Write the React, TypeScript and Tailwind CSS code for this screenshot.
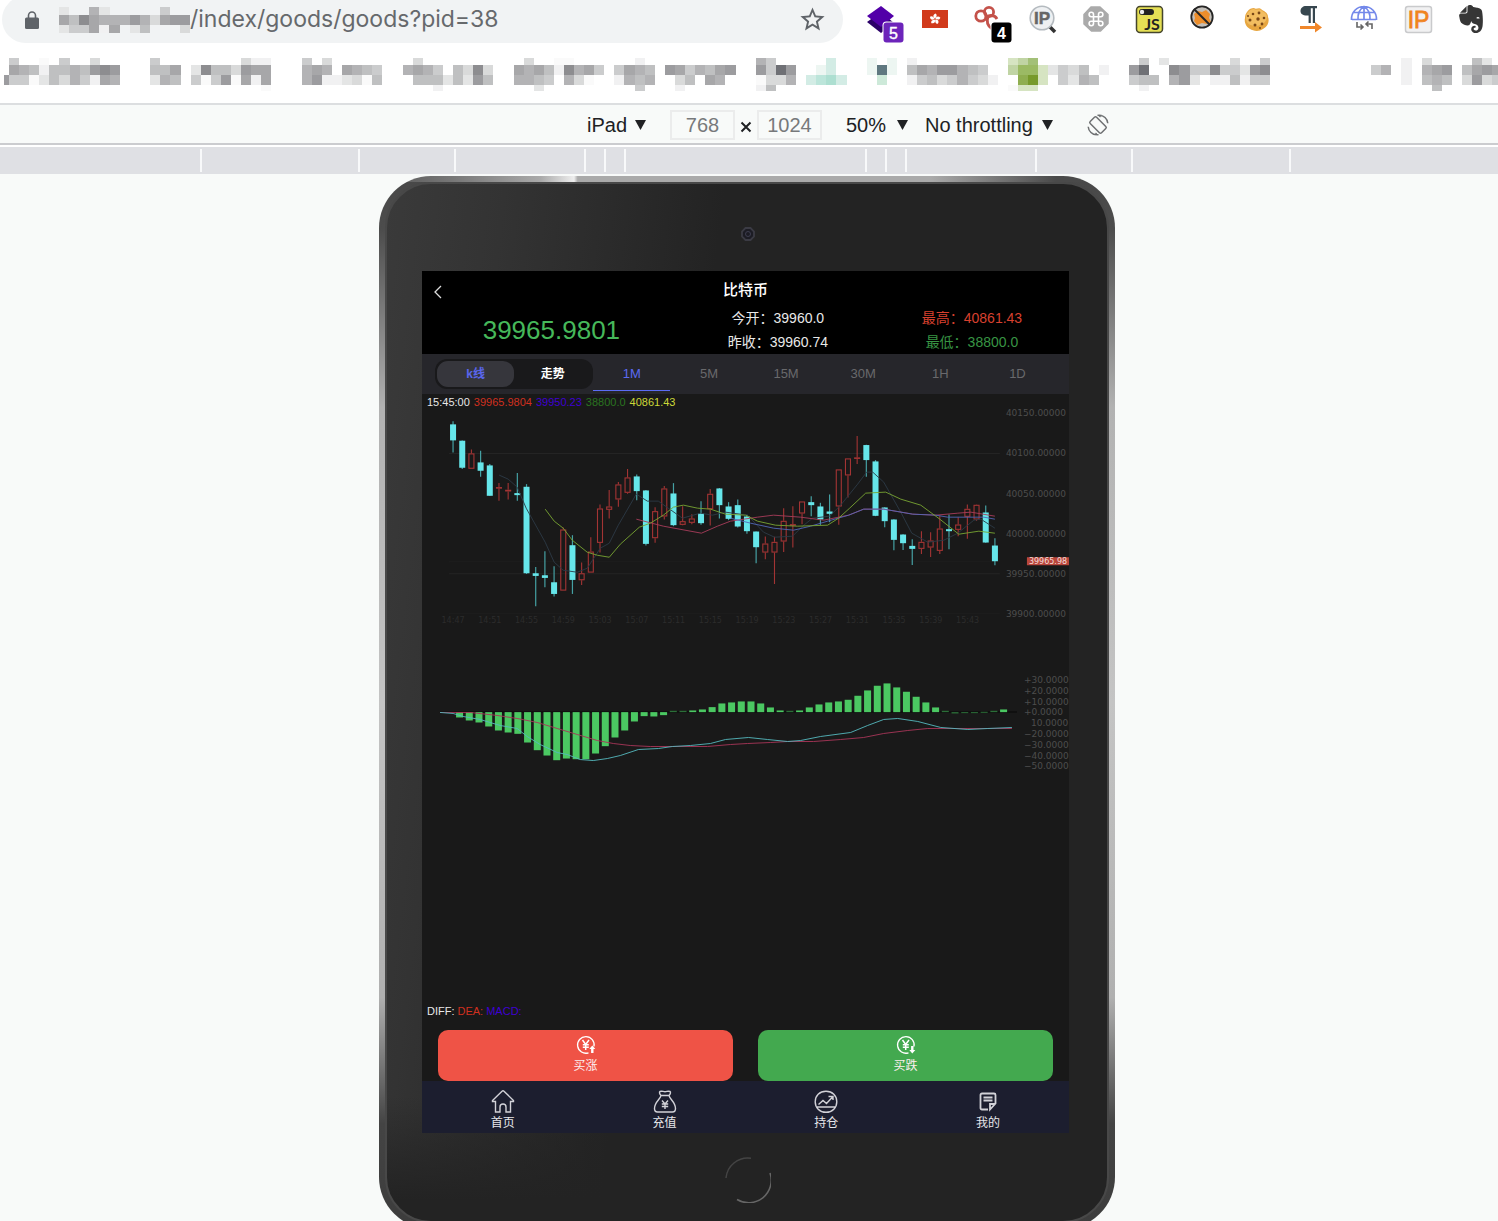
import type { ReactNode } from "react";
import { MdStarBorder } from "react-icons/md";
import { SiEvernote } from "react-icons/si";

/* ---------- pixelated (redacted) text ---------- */

type Strip = { row: number; col: number; levels: string };

const SHADES: Record<string, string> = {
  "0": "#fafafa", "1": "#f1f1f2", "2": "#e4e5e5", "3": "#d9dada", "4": "#cbcccd", "5": "#bfc0c1",
  "6": "#b3b3b5", "7": "#a7a7a9", "8": "#9c9c9f", "9": "#8d8d90", b: "#6f7075",
  p: "#edf6f2", q: "#d3ece5", r: "#bce5da", s: "#addfd1", t: "#5f7880", u: "#cde9d9",
  F: "#d6e4c2", G: "#c0d4a4", H: "#a3c078", I: "#9bba64", J: "#8fae50", K: "#779a2b",
};

const URL_STRIPS: Strip[] = [
  { row: 0, col: 0, levels: "2  62     4" },
  { row: 1, col: 0, levels: "7597666863788" },
  { row: 2, col: 0, levels: "244717 25   3" },
];

const BOOKMARK_STRIPS: Strip[] = [
  { row: 0, col: 0, levels: "4  0 4  3     4        311   4 3        3" },
  { row: 0, col: 51, levels: "3  00      1           64     q   p p 1" },
  { row: 0, col: 99, levels: "FGH" },
  { row: 0, col: 112, levels: "4 2      3  4" },
  { row: 0, col: 138, levels: "1 3    52" },
  { row: 1, col: 0, levels: "76515565898   557 29553877   676 7654  6764 5393" },
  { row: 1, col: 50, levels: "767519674 4765 8746578  84b8  pq   ptp 57688654" },
  { row: 1, col: 99, levels: "GIIF2435 1  8b  9844944289" },
  { row: 1, col: 135, levels: "46 1 678 5787" },
  { row: 2, col: -1, levels: "844025364176   265 40480717   68112305   55525285" },
  { row: 2, col: 50, levels: "6654 630  1656  35 76   0336 qrsq   u  145346431" },
  { row: 2, col: 100, levels: "JKF 4265   455 682 115144" },
  { row: 2, col: 138, levels: "1 565 3834" },
  { row: 3, col: 25, levels: "0" },
  { row: 3, col: 42, levels: "1" },
  { row: 3, col: 52, levels: "2" },
  { row: 3, col: 62, levels: "4   1" },
  { row: 3, col: 74, levels: "15" },
  { row: 3, col: 99, levels: "0FF" },
  { row: 3, col: 112, levels: "1" },
  { row: 3, col: 141, levels: "5" },
];

function Mosaic({ strips, rows, left, width, cell, label }: { strips: Strip[]; rows: number[]; left: number; width: number; cell: number; label: string }) {
  const height = rows[rows.length - 1];
  return (
    <svg width={width} height={height} viewBox={`0 0 ${width} ${height}`} role="img" aria-label={label} className="block shrink-0" shapeRendering="crispEdges">
      {strips.flatMap((s) =>
        s.levels.split("").map((c, i) => {
          const x = Math.max(s.col < 0 ? 4 : 0, left + (s.col + i) * cell);
          return c === " " ? null : (
            <rect key={`${s.row}-${s.col}-${i}`} x={x} y={rows[s.row]} width={left + (s.col + i + 1) * cell - x + 0.1} height={rows[s.row + 1] - rows[s.row]} fill={SHADES[c]} />
          );
        }),
      )}
    </svg>
  );
}

/* ---------- extension icons ---------- */

function Ext({ label, children }: { label: string; children: ReactNode }) {
  return (
    <button type="button" aria-label={label} className="flex flex-1 justify-center">
      <svg viewBox="0 0 48 46" className="h-[46px] w-12" fill="none">
        {children}
      </svg>
    </button>
  );
}

const PETALS = [0, 72, 144, 216, 288];

function Extensions() {
  return (
    <div className="flex w-[644px] shrink-0">
      <Ext label="Layers">
        <path d="M24 12 37 23 24 33 10 22z" fill="#2b0068" />
        <path d="M24 6 37 16 24 27 10 16z" fill="#5200a8" />
        <rect x="25.500" y="21.500" width="22" height="22" rx="4" fill="#fff" />
        <rect x="26.500" y="22.500" width="20" height="20" rx="3" fill="#6c24ba" />
        <text x="36.500" y="39" fontSize="16" textAnchor="middle" fill="#fff" stroke="#fff" strokeWidth=".4">5</text>
      </Ext>
      <Ext label="Hong Kong">
        <rect x="11" y="10" width="26" height="18" fill="#d13a1b" />
        <g fill="#fff" transform="translate(24 19)">
          {PETALS.map((a) => (
            <path key={a} d="M0-.5C-2.500-2-2-4.500.5-5.500 2.500-4 1.500-2 0-.5z" transform={`rotate(${a})`} />
          ))}
        </g>
      </Ext>
      <Ext label="Clover">
        <g stroke="#c4524a" strokeWidth="2.800">
          <circle cx="17" cy="16" r="5.200" />
          <circle cx="25" cy="12" r="4.600" />
          <path d="M21 18c4-4 10-3 12 1M24 17c-2 5 0 9 4 12" />
        </g>
        <rect x="26.500" y="21.500" width="22" height="22" rx="4" fill="#fff" />
        <rect x="27.500" y="22.500" width="20" height="20" rx="3" fill="#000" />
        <text x="37.500" y="39" fontSize="16" fontWeight="700" textAnchor="middle" fill="#fff">4</text>
      </Ext>
      <Ext label="IP lookup">
        <path d="m31 26 6 6" stroke="#333" strokeWidth="3.500" />
        <circle cx="24" cy="18" r="11.800" fill="#eef0f2" stroke="#b4babf" strokeWidth="1.600" />
        <text x="24" y="24" fontSize="17" fontWeight="700" textAnchor="middle" fill="#666" stroke="#666" strokeWidth=".5">IP</text>
      </Ext>
      <Ext label="Shortcuts">
        <path d="M19 7h9l8 7.500v9L28.500 31h-9L12 24v-9.500z" fill="#aaa" stroke="#aaa" strokeWidth="1.500" strokeLinejoin="round" />
        <path d="M21.500 14.500v9a2.200 2.200 0 1 1-2.200-2.200h9.400a2.200 2.200 0 1 1-2.200 2.200v-9a2.200 2.200 0 1 1 2.200 2.200h-9.400a2.200 2.200 0 1 1 2.200-2.200z" stroke="#fff" strokeWidth="1.600" />
      </Ext>
      <Ext label="JavaScript switch">
        <rect x="11.500" y="6.500" width="26" height="26" rx="3.500" fill="#e5df55" stroke="#45452c" strokeWidth="1.500" />
        <rect x="14" y="9" width="15" height="6" rx="3" fill="#222" />
        <circle cx="17" cy="12" r="2.200" fill="#eee" />
        <text x="27" y="29.500" fontSize="16" fontWeight="700" textAnchor="middle" fill="#222" fontFamily="Lato">JS</text>
      </Ext>
      <Ext label="Block cookies">
        <circle cx="23" cy="17" r="10.500" fill="#c3bfb9" />
        <path d="m15 14 4-3 4 1 4-2 4 4-1 4 2 4-4 2-5-1-5 2-3-4 1-3z" fill="#ec8e2c" />
        <circle cx="23" cy="17" r="10.700" stroke="#252525" strokeWidth="1.800" />
        <path d="m15 9 16 16" stroke="#252525" strokeWidth="2" />
      </Ext>
      <Ext label="Cookies">
        <path d="M21 8c2 2 5-1 7 1s7 3 7 8c2 5-1 10-5 12-4 3-10 2-13 0-4-2-6-7-5-11 0-5 4-10 9-10z" fill="#e7a640" />
        <path d="M21 9c2 2 5-1 7 1s6 3 6 7c0 5-6 9-11 9s-10-2-10-8c0-5 4-9 8-9z" fill="#f2bd60" />
        <g fill="#7a4818">
          <circle cx="20" cy="14" r="1.300" /><circle cx="26" cy="13" r="1.400" /><circle cx="31" cy="18" r="1.300" />
          <circle cx="25" cy="19" r="1.700" /><circle cx="17" cy="20" r="1.500" /><circle cx="22" cy="25" r="1.500" />
          <circle cx="29" cy="24" r="1.400" /><circle cx="15" cy="16" r="1" /><circle cx="27" cy="28" r="1" />
        </g>
      </Ext>
      <Ext label="Paragraph">
        <path d="M20 6h11v2.200h-2V23h-2.200V8.200h-2V23h-2.200v-7.500C17 16 14.500 14 14.500 11S17 6 20 6z" fill="#37474f" />
        <path d="M14 26h15v-4l7 5.500-7 5V29H14z" fill="#f0872a" />
      </Ext>
      <Ext label="Translate web">
        <g stroke="#7489ea" strokeWidth="1.700">
          <path d="M11.500 20C11 12 17 6.500 24 6.500S37 12 36.500 20M12 19.500h24M14 12.500h20M24 6.500v13M18 20c-.5-6 2-11 6-13.500 4 2.500 6.500 7.500 6 13.500" />
        </g>
        <path d="M17 22v5h6m-2.500-2.500L23 27l-2.500 2.500M32 29v-5h-6m2.500-2.500L26 24l2.500 2.500" stroke="#666" strokeWidth="1.600" />
      </Ext>
      <Ext label="IP address">
        <rect x="11.500" y="6.500" width="26" height="26" rx="2.500" fill="#f1f1f2" stroke="#c9cacc" strokeWidth="1.500" />
        <text x="24.500" y="27.500" fontSize="23" textAnchor="middle" fill="#f0841e" stroke="#f0841e" strokeWidth=".8">IP</text>
      </Ext>
      <Ext label="Evernote">
        <SiEvernote x="10" y="5" size={28} color="#363636" />
      </Ext>
    </div>
  );
}

/* ---------- browser chrome ---------- */

function Arrow() {
  return (
    <svg viewBox="0 0 11 10" className="pointer-events-none h-[10px] w-[11px]" aria-hidden="true">
      <path d="M0 0h11L5.500 10z" fill="#202124" />
    </svg>
  );
}

function Picker({ label, value, className }: { label: string; value: string; className: string }) {
  return (
    <span className="flex items-center">
      <select aria-label={label} defaultValue={value} className={`appearance-none bg-transparent text-xl leading-6 text-[#202124] ${className}`}>
        <option>{value}</option>
      </select>
      <Arrow />
    </span>
  );
}

const SEGMENTS = ["w-[158px]", "w-24", "w-[130px]", "w-5", "w-5", "w-[241px]", "w-5", "w-5", "w-[130px]", "w-24", "w-[158px]"];

function Chrome() {
  return (
    <header className="shrink-0 bg-white">
      <div className="flex h-[50px] items-start overflow-hidden pl-0.5">
        <div className="-mt-1 flex h-[47px] flex-1 items-center rounded-full bg-[#f1f3f4] pl-[23px] pr-4">
          <svg viewBox="0 0 14 18" className="h-[18px] w-3.5 shrink-0" aria-hidden="true">
            <path d="M3.500 7V4.500a3.500 3.500 0 0 1 7 0V7" fill="none" stroke="#5f6368" strokeWidth="1.600" />
            <rect y="6.500" width="14" height="11.500" rx="1.500" fill="#5f6368" />
          </svg>
          <label htmlFor="address" className="ml-5 shrink-0">
            <Mosaic label="Hidden host" strips={URL_STRIPS} rows={[0, 8, 18, 26]} left={0} width={131} cell={10.09} />
          </label>
          <input id="address" defaultValue="/index/goods/goods?pid=38" className="min-w-0 flex-1 bg-transparent font-['Inter',sans-serif] text-[23px] text-[#66696c] outline-none" />
          <button type="button" aria-label="Bookmark this page">
            <MdStarBorder className="size-[29px] text-[#5f6368]" />
          </button>
        </div>
        <div className="w-[11px] shrink-0" />
        <Extensions />
      </div>
      <div className="overflow-hidden pb-3 pt-2">
        <Mosaic label="Hidden bookmarks" strips={BOOKMARK_STRIPS} rows={[0, 7, 17, 27, 33]} left={9} width={1498} cell={10.09} />
      </div>
      <div className="flex h-[42px] items-center justify-center border-y-2 border-t-[#dcdee0] border-b-[#cbcccf] bg-[#f8faf9] pl-[198px] pt-0.5">
        <Picker label="Device" value="iPad" className="w-[48px]" />
        <input aria-label="Width" defaultValue="768" className="ml-6 h-[30px] w-[65px] border-2 border-[#ebecec] bg-transparent text-center text-xl text-[#77797b]" />
        <svg viewBox="0 0 12 12" className="mx-[5px] mt-1 size-3" aria-hidden="true">
          <path d="m1.500 1.500 9 9m0-9-9 9" stroke="#202124" strokeWidth="2" />
        </svg>
        <input aria-label="Height" defaultValue="1024" className="h-[30px] w-[65px] border-2 border-[#ebecec] bg-transparent text-center text-xl text-[#77797b]" />
        <span className="w-6" />
        <Picker label="Zoom" value="50%" className="w-[51px]" />
        <span className="w-[17px]" />
        <Picker label="Throttling" value="No throttling" className="w-[117px]" />
        <button type="button" aria-label="Rotate" className="ml-[34px]">
          <svg viewBox="0 0 22 22" className="size-[22px]" fill="none" stroke="#6e7072" strokeWidth="1.500">
            <rect x="6.500" y="3" width="9" height="16" rx="1.500" transform="rotate(-45 11 11)" />
            <path d="M12.500 1.200c4 0 8 3.500 8.300 8M9.500 20.800c-4 0-8-3.500-8.300-8M10.500 1.300l3 .2-1 1.500M11.500 20.700l-3-.2 1-1.500" />
          </svg>
        </button>
      </div>
      <div className="mt-0.5 flex h-[27px] justify-center bg-[#dfe0e4] py-0.5 pr-2">
        {SEGMENTS.map((w, i) => (
          <span key={i} className={`box-border border-l-2 border-[#f8f9fa] ${w}`} />
        ))}
        <span className="w-0.5 bg-[#f8f9fa]" />
      </div>
    </header>
  );
}

/* ---------- chart ---------- */

/* direction, high, open/close top, open/close bottom, low — in thirds of a unit below y = 390 */
const CANDLES: [string, number, number, number, number][] = [
  ["d", 94, 103, 151, 187], ["d", 151, 152, 233, 237], ["u", 178, 190, 236, 236], ["d", 182, 217, 242, 260],
  ["d", 222, 226, 317, 317], ["u", 279, 291, 295, 332], ["u", 279, 299, 304, 328], ["d", 249, 309, 315, 332],
  ["d", 282, 290, 549, 551], ["d", 530, 549, 557, 648], ["d", 483, 555, 563, 591], ["d", 528, 576, 611, 619],
  ["u", 412, 418, 601, 601], ["d", 435, 465, 569, 611], ["u", 517, 549, 570, 584], ["u", 441, 484, 547, 547],
  ["u", 343, 355, 458, 487], ["u", 300, 349, 359, 385], ["u", 276, 283, 328, 350], ["u", 237, 262, 308, 311],
  ["d", 253, 259, 303, 330], ["d", 300, 301, 461, 466], ["u", 351, 363, 444, 458], ["u", 288, 295, 379, 388],
  ["d", 279, 310, 405, 408], ["u", 348, 393, 404, 405], ["u", 372, 385, 398, 402], ["d", 333, 370, 399, 404],
  ["u", 297, 311, 357, 406], ["d", 294, 295, 345, 385], ["d", 336, 349, 386, 390], ["d", 328, 345, 409, 412],
  ["d", 374, 379, 423, 431], ["d", 424, 424, 471, 519], ["u", 439, 460, 487, 507], ["u", 440, 455, 487, 581],
  ["u", 354, 392, 454, 485], ["u", 348, 402, 405, 472], ["u", 334, 334, 370, 402], ["d", 318, 336, 345, 378],
  ["d", 338, 349, 388, 404], ["d", 313, 364, 371, 396], ["u", 238, 238, 349, 404], ["u", 205, 205, 256, 322],
  ["u", 138, 202, 205, 222], ["d", 164, 165, 210, 260], ["d", 210, 214, 377, 378], ["d", 351, 352, 393, 411],
  ["d", 387, 388, 449, 480], ["d", 432, 433, 459, 479], ["d", 447, 467, 476, 524], ["u", 423, 455, 476, 491],
  ["u", 426, 451, 472, 500], ["u", 377, 415, 482, 491], ["d", 373, 417, 423, 477], ["u", 381, 403, 419, 438],
  ["u", 343, 356, 380, 446], ["u", 343, 344, 388, 392], ["d", 346, 367, 457, 458], ["d", 444, 466, 513, 525],
];

const LINES = [
  { color: "#2d3a46", points: "499,475 508,479 517,487 526,508 545,542 554,562 563,570 577,572 587,568 600,548 609,543 618,525 636,494 647,501 658,501 682,518 700,513 712,515 725,512 747,515 763,532 774,537 792,536 802,526 812,518 829,516 840,505 857,484 866,472 872,472 883,482 900,512 911,533 927,542 943,540 957,533 973,520 980,519 994,528" },
  { color: "#a83c5a", points: "636,519 663,526 701,533 717,526 730,521 757,517 773,515 800,517 823,520 848,515 863,509 883,509 912,514 935,515 957,513 970,512 994,516" },
  { color: "#5268b8", points: "730,518 750,523 773,528 793,530 810,526 827,521 848,515 863,509 883,509 912,514 935,515 947,517 983,517 994,519" },
  { color: "#78a532", points: "545,509 554,521 563,528 572,540 587,552 597,555 609,557 620,544 639,527 650,523 663,515 673,507 683,505 697,508 710,509 725,514 745,515 757,521 775,525 797,526 827,525 838,518 849,508 865,493 885,492 900,499 920,505 939,519 958,534 978,531 994,533" },
];

const MACD_BARS = [
  171, 180, 186, 198, 210, 216, 220, 246, 269, 285, 299, 294, 296, 296, 279, 257, 231, 210, 183, 167, 168, 164, 151, 151, 150,
  147, 140, 129, 126, 123, 123, 129, 141, 150, 151, 150, 141, 132, 126, 123, 118, 106, 90, 76, 69, 81, 94, 109, 126, 141, 151,
  159, 158, 158, 154, 151, 147,
];

const DIFF_LINE = "440,712 453,713 463,716 480,719 500,725 517,728 527,736 540,744 557,752 567,754 580,759 593,760 607,758 620,755 638,749 658,748 672,746 690,745 710,743 725,739 748,737 767,739 787,741 800,740 820,736 850,732 867,725 883,719 897,718 917,721 940,727 967,729 987,728 1011,727";
const DEA_LINE = "440,712 470,712 497,715 517,718 537,722 557,728 577,734 597,740 613,743 630,745 650,746 707,746 730,744 747,743 770,742 787,741 813,741 840,739 863,737 883,733 907,730 927,728 1011,728";

const PRICES = ["40150.00000", "40100.00000", "40050.00000", "40000.00000", "39950.00000", "39900.00000"];
const TIMES = ["14:47", "14:51", "14:55", "14:59", "15:03", "15:07", "15:11", "15:15", "15:19", "15:23", "15:27", "15:31", "15:35", "15:39", "15:43"];
const MACD_TICKS = ["+30.0000", "+20.0000", "+10.0000", "+0.0000", "10.0000", "−20.0000", "−30.0000", "−40.0000", "−50.0000"];

function Chart() {
  return (
    <svg viewBox="422 411 646 591" className="block h-auto w-full overflow-visible font-['DejaVu_Sans',sans-serif]" fill="none" role="img" aria-label="K线图">
      <path d="M449 453.500h550M449 573.500h550" stroke="#242424" />
      <path d="M449 561.500h550M449 613.500h550" stroke="#1e1e1e" />
      <g fontSize="9" fill="#4d4d4d">
        {PRICES.map((p, i) => (
          <text key={p} x="1005" y={416 + i * 40.200}>{p}</text>
        ))}
      </g>
      <g fontSize="8" fill="#2c2c2c" textAnchor="middle">
        {TIMES.map((t, i) => (
          <text key={t} x={453 + i * 36.700} y="623">{t}</text>
        ))}
      </g>
      {CANDLES.map(([dir, high, top, bottom, low], i) => {
        const x = 453 + i * 9.170;
        const y = (v: number) => 390 + v / 3;
        return dir === "d" ? (
          <g key={i}>
            <path d={`M${x} ${y(high)}V${y(low)}`} stroke="#45a0a3" strokeWidth="1.200" />
            <rect x={x - 3} y={y(top)} width="6" height={Math.max(2, y(bottom) - y(top))} fill="#66e6ea" />
          </g>
        ) : (
          <g key={i} stroke="#a33434" strokeWidth="1.100">
            <path d={`M${x} ${y(high)}V${y(top)}M${x} ${y(bottom)}V${y(low)}`} />
            <rect x={x - 2.500} y={y(top) + 0.5} width="5" height={Math.max(0.5, y(bottom) - y(top) - 1)} />
          </g>
        );
      })}
      {LINES.map((l) => (
        <polyline key={l.color} points={l.points} stroke={l.color} strokeWidth=".9" strokeLinejoin="round" />
      ))}
      <rect x="1026" y="557" width="42" height="8" fill="#b9463b" />
      <text x="1028" y="564" fontSize="8" fill="#f3dcd9">39965.98</text>

      <path d="M440 711.500h576" stroke="#080808" />
      {MACD_BARS.map((v, i) => {
        const small = Math.abs(v - 155) < 5;
        return (
          <rect key={i} x={456 + i * 9.700} y={660 + Math.min(v, 155) / 3} width="7" height={Math.max(1, Math.abs(v - 155) / 3)} fill={small ? "#2b6e38" : "#4bc862"} />
        );
      })}
      <polyline points={DEA_LINE} stroke="#a83658" strokeWidth=".9" />
      <polyline points={DIFF_LINE} stroke="#55b9be" strokeWidth=".9" />
      <g fontSize="9" fill="#4d4d4d">
        {MACD_TICKS.map((t, i) => (
          <text key={t} x={t === "10.0000" ? 1030 : 1023} y={682.500 + i * 10.800}>{t}</text>
        ))}
      </g>
    </svg>
  );
}

/* ---------- trading page ---------- */

const TABS = ["1M", "5M", "15M", "30M", "1H", "1D"];

function YenIcon({ up }: { up: boolean }) {
  return (
    <svg viewBox="0 0 20 20" className="size-5" fill="none" stroke="#fff" strokeWidth="1.300" aria-hidden="true">
      <path d="M18 11.500A8.300 8.300 0 1 0 12.500 17.800" />
      <path d="m6.500 5 3.200 4.500L13 5M9.700 9.500V15M6.800 9.700h6M6.800 12.200h6" strokeWidth="1.500" />
      {up ? <path d="M16.300 10.500 19.300 14h-1.800v4h-2.400v-4h-1.800z" fill="#fff" stroke="none" /> : <path d="M16.300 18.500 19.300 15h-1.800v-4h-2.400v4h-1.800z" fill="#fff" stroke="none" />}
    </svg>
  );
}

const NAV: { label: string; icon: ReactNode }[] = [
  { label: "首页", icon: <path d="M4.500 11.500H1.500V10.500L11 1.200c.6-.5 1.400-.5 2 0l9.500 9.300v1h-3v10.500h-4.500V17c0-1.600-1-3-3-3s-3 1.400-3 3v5H4.500z" /> },
  { label: "充值", icon: <path d="M8 5.500C6.500 4 6 2 7 1.500c2-.9 3 .2 5 .2s3-1.100 5-.2c1 .5.500 2.500-1 4zM8 5.500C7.500 9 1.500 12 1.500 18.500c0 2.500 1 3.500 3 3.500h15c2 0 3-1 3-3.500C22.500 12 16.500 9 16 5.500M9 10.500l3 3.500 3-3.500M12 14v5M8.800 14h6.400M8.800 16.500h6.400" /> },
  { label: "持仓", icon: <path d="M12 1.200c6.500 0 10.800 4.800 10.800 10.500S18.500 22.300 12 22.300 1.200 17.500 1.200 11.700 5.500 1.200 12 1.200zM3 17h18M4.500 14.500 9 10.500l3.500 3L18.500 7M14.500 6.500h4.500V10" /> },
  { label: "我的", icon: <path d="M12 19.500H6c-1 0-1.500-.6-1.500-1.500V5c0-1 .6-1.500 1.500-1.500h12c1 0 1.500.5 1.500 1.500v8.500L14 19.500v-5.500h5.500M7.500 7.500h9M7.500 10.500h9" strokeWidth="1.800" /> },
];

function TradingPage() {
  return (
    <div className="bg-[#191919]">
      <section className="bg-black pt-[3px]">
        <div className="relative flex h-8 items-center justify-center">
          <button type="button" aria-label="返回" className="absolute left-[11px] top-[11px]">
            <svg viewBox="0 0 10 14" className="h-[14px] w-[10px]" fill="none" stroke="#ddd" strokeWidth="1.300">
              <path d="M8 1 2 7l6 6" />
            </svg>
          </button>
          <h1 className="text-[15px] font-medium leading-7 text-white">比特币</h1>
        </div>
        <div className="grid grid-cols-[4fr_3fr_3fr] text-center text-sm leading-6 text-[#e8e8e8]">
          <div className="flex items-center justify-center text-[26px] text-[#46b85a]">39965.9801</div>
          <div>
            <p>今开：39960.0</p>
            <p>昨收：39960.74</p>
          </div>
          <div>
            <p className="text-[#d8402f]">最高：40861.43</p>
            <p className="text-[#389544]">最低：38800.0</p>
          </div>
        </div>
      </section>

      <div className="flex h-10 items-stretch bg-[#26262b] px-[13px]">
        <div className="my-[5px] flex flex-[2] rounded-xl bg-[#19191b] p-0.5 text-xs font-bold">
          <button type="button" className="flex-1 rounded-[11px] bg-[#36363c] text-[#5a66ee]">k线</button>
          <button type="button" className="flex-1 text-white">走势</button>
        </div>
        {TABS.map((t, i) => (
          <button key={t} type="button" className={`mb-[3px] flex-1 border-b pt-1 text-[13px] ${i === 0 ? "border-[#5b6cf5] text-[#5b6af0]" : "border-transparent text-[#69696c]"}`}>
            {t}
          </button>
        ))}
      </div>

      <p className="flex h-[17px] gap-1 px-[5px] text-[11px] leading-[17px]">
        <span className="text-[#e8e8e8]">15:45:00</span>
        <span className="text-[#d0301f]">39965.9804</span>
        <span className="text-[#3f00d2]">39950.23</span>
        <span className="text-[#2a7420]">38800.0</span>
        <span className="text-[#ccd838]">40861.43</span>
      </p>
      <Chart />
      <p className="flex h-4 gap-[3px] px-[5px] text-[11px] leading-4">
        <span className="text-[#e8e8e8]">DIFF:</span>
        <span className="text-[#d0301f]">DEA:</span>
        <span className="text-[#3f00d2]">MACD:</span>
      </p>

      <div className="grid grid-cols-2 gap-[25px] px-4 pt-[11px] text-xs text-[#fdeeee]">
        <button type="button" className="flex h-[51px] flex-col items-center rounded-[10px] bg-[#ef5346] pt-[5px]">
          <YenIcon up />
          <span className="leading-[22px]">买涨</span>
        </button>
        <button type="button" className="flex h-[51px] flex-col items-center rounded-[10px] bg-[#43a94f] pt-[5px]">
          <YenIcon up={false} />
          <span className="leading-[22px]">买跌</span>
        </button>
      </div>

      <nav className="grid h-[52px] grid-cols-4 bg-[#1c1e2f]">
        {NAV.map((n) => (
          <a key={n.label} href="#" className="flex flex-col items-center pt-[9px] text-xs leading-[18px] text-[#e6e6ea]">
            <svg viewBox="0 0 24 24" className="size-6" fill="none" stroke="#d2d2d8" strokeWidth="1.400" aria-hidden="true">
              {n.icon}
            </svg>
            {n.label}
          </a>
        ))}
      </nav>
    </div>
  );
}

export default function App() {
  return (
    <div className="flex h-screen flex-col overflow-hidden bg-[#f8faf9] font-['Liberation_Sans','Noto_Sans_CJK_SC',sans-serif]">
      <Chrome />
      <main className="min-h-0 flex-1 overflow-hidden pr-1 pt-0.5">
        <div className="mx-auto w-[736px] max-w-full rounded-[52px] bg-[linear-gradient(90deg,#555_0%,#777_10%,#aaa_22%,#eee_26.500%,#aaa_27%,#aaa_75%,#4a4a4a_92%),linear-gradient(180deg,#484848_0%,#4c4c4c_5%,#b2b2b2_22%,#c4c4c4_50%,#b0b0b0_78%,#444_90%,#3c3c3c_100%)] bg-[length:100%_6px,100%_100%] bg-no-repeat p-1.5">
          <div className="rounded-[46px] border-2 border-[#484848] bg-[linear-gradient(180deg,transparent_88%,#232323_98%),linear-gradient(97deg,#3a3a3a_0%,#333_14%,#232323_40%,#232323_100%)] pb-[18px] pl-[35px] pr-[38px] pt-[43px]">
            <div className="flex justify-center pl-1 pb-[30px]">
              <svg viewBox="0 0 14 14" className="size-3.5" fill="#1c1c24" aria-hidden="true">
                <path d="M4.500 1h5L13 4.500v5L9.500 13h-5L1 9.500v-5z" stroke="#3b3b44" strokeWidth="1.800" />
                <circle cx="7" cy="7" r="2.500" stroke="#3e3e50" />
              </svg>
            </div>
            <TradingPage />
            <div className="flex justify-center pl-1 pt-6">
              <button type="button" aria-label="Home" className="size-[46px] rounded-full">
                <svg viewBox="0 0 46 46" className="size-[46px]" fill="none" strokeWidth="1.500">
                  <path d="M1 21A22 22 0 0 1 26 1.200" stroke="#444" />
                  <path d="M45 16A22.500 22.500 0 0 1 12 42.500" stroke="#666" />
                </svg>
              </button>
            </div>
          </div>
        </div>
      </main>
    </div>
  );
}
